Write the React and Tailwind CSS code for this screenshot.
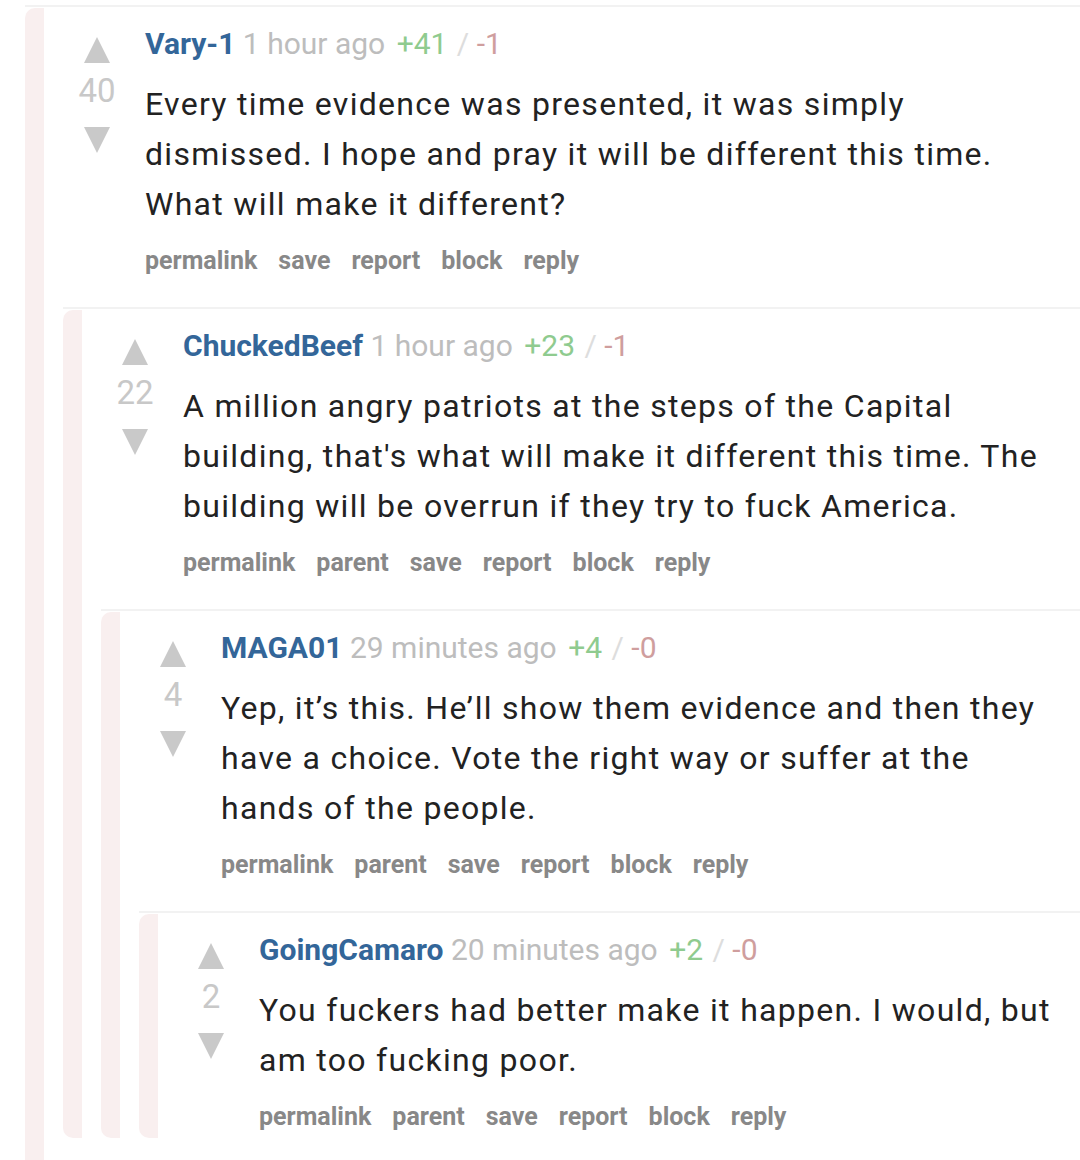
import React from 'react';

const thread = {
  author: 'Vary-1',
  time: '1 hour ago',
  up: 41,
  down: 1,
  score: 40,
  body: 'Every time evidence was presented, it was simply dismissed. I hope and pray it will be different this time. What will make it different?',
  actions: ['permalink', 'save', 'report', 'block', 'reply'],
  reply: {
    author: 'ChuckedBeef',
    time: '1 hour ago',
    up: 23,
    down: 1,
    score: 22,
    body: "A million angry patriots at the steps of the Capital building, that's what will make it different this time. The building will be overrun if they try to fuck America.",
    actions: ['permalink', 'parent', 'save', 'report', 'block', 'reply'],
    reply: {
      author: 'MAGA01',
      time: '29 minutes ago',
      up: 4,
      down: 0,
      score: 4,
      body: 'Yep, it\u2019s this. He\u2019ll show them evidence and then they have a choice. Vote the right way or suffer at the hands of the people.',
      actions: ['permalink', 'parent', 'save', 'report', 'block', 'reply'],
      reply: {
        author: 'GoingCamaro',
        time: '20 minutes ago',
        up: 2,
        down: 0,
        score: 2,
        body: 'You fuckers had better make it happen. I would, but am too fucking poor.',
        actions: ['permalink', 'parent', 'save', 'report', 'block', 'reply'],
      },
    },
  },
};

function Arrow({ down }) {
  return (
    <svg width="26" height="26" viewBox="0 0 26 26" className="block">
      {down ? (
        <polygon points="0,0 26,0 13,26" fill="#c9c9c9" />
      ) : (
        <polygon points="13,0 26,26 0,26" fill="#c9c9c9" />
      )}
    </svg>
  );
}

function Comment({ c, outer }) {
  return (
    <div className="border-t-2 border-[#f2f2f2] pt-[1px]">
      <div className="flex">
        <div className="w-[19px] shrink-0 rounded-l-[10px] bg-[#f9efef]" />
        <div className={`flex-1 min-w-0 ${outer ? 'pb-[60px]' : ''}`}>
          <div className="flex">
            {/* votes */}
            <div className="ml-[27px] w-[52px] shrink-0 flex flex-col items-center pt-[29px]">
              <Arrow />
              <div className="mt-[10px] text-[33px] leading-[36px] text-[#c8c8c8]">{c.score}</div>
              <div className="mt-[18px]">
                <Arrow down />
              </div>
            </div>

            <div className="flex-1 min-w-0 pl-[22px] pr-[18px] pt-[16px] pb-[5px]">
              <div className="text-[30px] leading-[40px] whitespace-nowrap">
                <span className="font-bold text-[#336699]">{c.author}</span>
                <span className="text-[#bdbdbd]"> {c.time} </span>
                <span className="ml-[4px] text-[#8fcb8f]">+{c.up}</span>
                <span className="ml-[2px] text-[#dddddd]"> / </span>
                <span className="text-[#cf9e9e]">-{c.down}</span>
              </div>
              <p className="mt-[15px] text-[32px] leading-[50px] tracking-[1.3px] text-[#222222]">{c.body}</p>
              <div className="mt-[16px] flex gap-[21px] text-[25px] leading-[32px] font-bold text-[#888888]">
                {c.actions.map((a) => (
                  <span key={a}>{a}</span>
                ))}
              </div>
            </div>
          </div>

          {c.reply && (
            <div className="ml-[19px] mt-[25px]">
              <Comment c={c.reply} />
            </div>
          )}
        </div>
      </div>
    </div>
  );
}

export default function App() {
  return (
    <div
      className="w-[1080px] h-[1160px] overflow-hidden bg-white pt-[5px] pl-[25px]"
      style={{ fontFamily: 'Roboto, "Noto Sans", sans-serif' }}
    >
      <Comment c={thread} outer />
    </div>
  );
}
